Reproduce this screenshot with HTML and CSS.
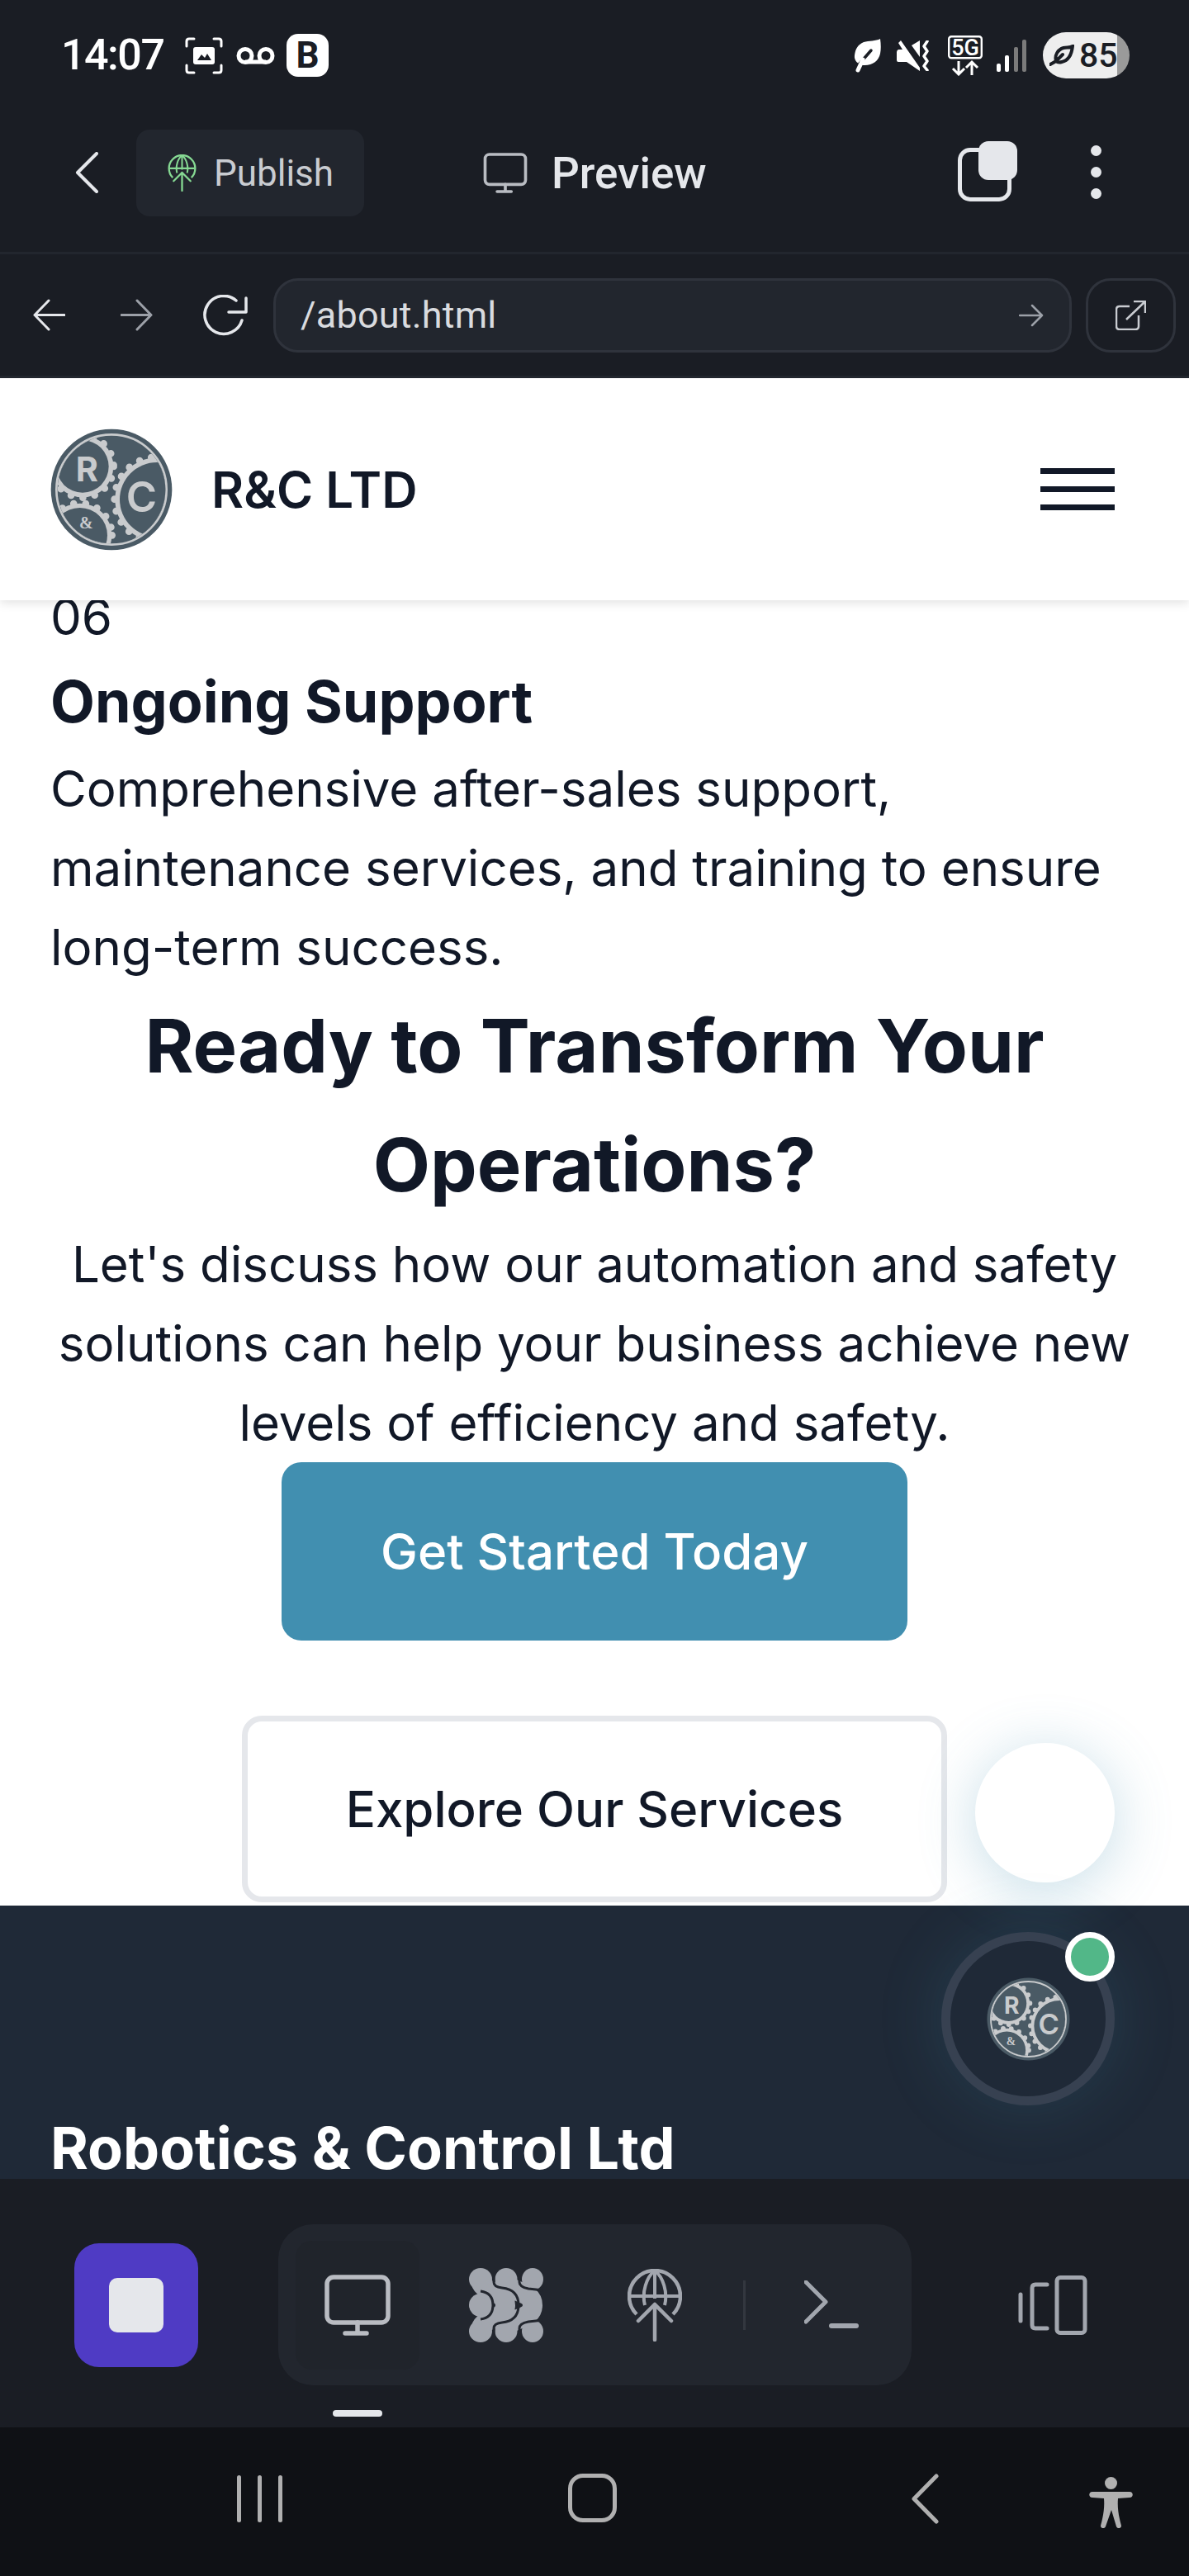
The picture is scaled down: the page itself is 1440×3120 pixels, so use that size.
FILE: index.html
```html
<!DOCTYPE html>
<html lang="en">
<head>
<meta charset="utf-8">
<title>R&amp;C LTD</title>
<link rel="stylesheet" href="styles.css">
</head>
<body>
<svg class="defs" aria-hidden="true">
  <defs>
    <symbol id="i-monitor" viewBox="0 0 80 74">
      <rect x="3" y="3" width="74" height="55" rx="8" fill="none" stroke="currentColor" stroke-width="5.5"/>
      <path d="M40 58V70M25 71H51" fill="none" stroke="currentColor" stroke-width="5.5" stroke-linecap="round"/>
    </symbol>
    <symbol id="i-globe" viewBox="0 0 66 88">
      <path d="M11 55C5 49 2 41 2 33C2 16 16 2 33 2C50 2 64 16 64 33C64 41 61 49 55 55" fill="none" stroke="currentColor" stroke-width="4.5"/>
      <path d="M21 44C17 28 23 10 33 2C43 10 49 28 45 44M33 2V36M3 33H63" fill="none" stroke="currentColor" stroke-width="4"/>
      <path d="M33 86V43M13 63L33 43L53 63" fill="none" stroke="currentColor" stroke-width="4.5" stroke-linecap="round" stroke-linejoin="round"/>
    </symbol>
    <symbol id="i-logo" viewBox="63 14 444 444">
      <clipPath id="logo-clip"><circle cx="285" cy="236" r="196"/></clipPath>
      <circle cx="285" cy="236" r="220" fill="#4a5a65"/>
      <circle cx="285" cy="236" r="200" fill="#4a5a65" stroke="#c9cbcd" stroke-width="8"/>
      <g clip-path="url(#logo-clip)">
        <circle cx="180" cy="152" r="112" fill="#c9cbcd"/>
        <circle cx="180" cy="152" r="113" class="teeth"/>
        <circle cx="450" cy="272" r="152" fill="#c9cbcd"/>
        <circle cx="450" cy="272" r="154" class="teeth"/>
        <circle cx="170" cy="402" r="116" fill="#c9cbcd"/>
        <circle cx="170" cy="402" r="117" class="teeth"/>
        <circle cx="180" cy="152" r="95" fill="#4a5a65"/>
        <circle cx="450" cy="272" r="135" fill="#4a5a65"/>
        <circle cx="170" cy="402" r="100" fill="#4a5a65"/>
      </g>
      <text x="155" y="207" class="logo-r">R</text>
      <text x="338" y="316" class="logo-c">C</text>
      <text x="168" y="376" class="logo-amp">&amp;</text>
    </symbol>
  </defs>
</svg>

<div class="phone">
  <div class="status">
    <div class="status-left">
      <span class="time">14:07</span>
      <svg class="ic-shot" viewBox="0 0 46 45"><path d="M2 11V5Q2 2 5 2H11M35 2H41Q44 2 44 5V11M2 34V40Q2 43 5 43H11M35 43H41Q44 43 44 40V34" fill="none" stroke="#fff" stroke-width="3" stroke-linecap="round"/><rect x="10" y="12" width="26" height="21" rx="3" fill="#fff"/><path d="M15 28L20 21L24 25L27 20L32 28Z" fill="#1a1d24"/></svg>
      <svg class="ic-vm" viewBox="0 0 47 21"><path d="M11 18H36" stroke="#fff" stroke-width="5"/><circle cx="11" cy="10.500" r="8" fill="none" stroke="#fff" stroke-width="5"/><circle cx="36" cy="10.500" r="8" fill="none" stroke="#fff" stroke-width="5"/></svg>
      <span class="badge-b">B</span>
    </div>
    <div class="status-right">
      <svg class="ic-leaf" viewBox="0 0 33 42"><path d="M32 1C33 8 33 14 32 19C30 28 22 34 11 33C5 32 0 27 1 21C2 13 5 8 12 5C18 3 27 4 32 1Z" fill="#fff"/><path d="M21 15L7 31" stroke="#1a1d24" stroke-width="3.500" stroke-linecap="round"/><path d="M11 26L5 39" stroke="#fff" stroke-width="5" stroke-linecap="round"/></svg>
      <svg class="ic-mute" viewBox="0 0 40 37"><path d="M2 3L5 0L28 33V37L12 26H2Q0 26 0 24V14Q0 12 2 11H7Z" fill="#fff"/><path d="M18 6L28 0V20Z" fill="#fff"/><path d="M37 1L33 7L37 13L33 19L37 25L33 31L37 36" fill="none" stroke="#fff" stroke-width="3.500" stroke-linejoin="round" stroke-linecap="round"/></svg>
      <svg class="ic-5g" viewBox="0 0 42 49"><rect x="1.200" y="1.200" width="39.600" height="26" rx="3" fill="none" stroke="#fff" stroke-width="2.400"/><text x="21" y="23.500" class="txt-5g">5G</text><path d="M13 31V47M6 40L13 47L20 40M29 48V32M22 39L29 32L36 39" fill="none" stroke="#fff" stroke-width="3"/></svg>
      <svg class="ic-signal" viewBox="0 0 36 39"><rect x="0" y="29" width="5" height="10" rx="2" fill="#fff"/><rect x="10" y="19" width="5" height="20" rx="2" fill="#fff"/><rect x="21" y="9" width="5" height="30" rx="2" fill="#7b7b7b"/><rect x="31" y="0" width="5" height="39" rx="2" fill="#7b7b7b"/></svg>
      <div class="battery">
        <svg class="ic-batleaf" viewBox="0 0 30 26"><path d="M28 2C27 11 24 19 15 21C12 22 9 21 8 20C6 13 10 6 17 4C21 3 25 4 28 2ZM8 20L16 12M8 20L1 24" fill="none" stroke="#1a1d24" stroke-width="4" stroke-linecap="round"/></svg>
        <span class="bat-num">85</span>
      </div>
    </div>
  </div>

  <div class="toolbar">
    <svg class="ic-chev" viewBox="0 0 28 50"><path d="M26 2L3 25L26 48" fill="none" stroke="#e5e7eb" stroke-width="4" stroke-linecap="round" stroke-linejoin="round"/></svg>
    <div class="publish">
      <svg class="ic-globe-sm"><use href="#i-globe"/></svg>
      <span>Publish</span>
    </div>
    <div class="preview">
      <svg class="ic-monitor-sm"><use href="#i-monitor"/></svg>
      <span>Preview</span>
    </div>
    <div class="tool-right">
      <div class="tabs"><span class="tab-back"></span><span class="tab-front"></span></div>
      <div class="kebab"><i></i><i></i><i></i></div>
    </div>
  </div>

  <div class="addr-row">
    <svg class="ic-arrow" viewBox="0 0 39 39"><path d="M38 19.500H2M19 2L2 19.500L19 37" fill="none" stroke="#e5e7eb" stroke-width="3" stroke-linecap="round" stroke-linejoin="round"/></svg>
    <svg class="ic-arrow dim" viewBox="0 0 39 39"><path d="M1 19.500H37M20 2L37 19.500L20 37" fill="none" stroke="#9ca0a8" stroke-width="3" stroke-linecap="round" stroke-linejoin="round"/></svg>
    <svg class="ic-reload" viewBox="0 0 54 50"><path d="M40 7A23 23 0 1 0 47 31" fill="none" stroke="#e5e7eb" stroke-width="3.500" stroke-linecap="round"/><path d="M52 4V21H31" fill="none" stroke="#e5e7eb" stroke-width="3.500" stroke-linecap="round" stroke-linejoin="round"/></svg>
    <div class="url">
      <span>/about.html</span>
      <svg class="ic-go" viewBox="0 0 30 28"><path d="M1 14H28M16 2L28 14L16 26" fill="none" stroke="#9ca0a8" stroke-width="2.500" stroke-linecap="round" stroke-linejoin="round"/></svg>
    </div>
    <div class="open-ext">
      <svg class="ic-ext" viewBox="0 0 37 36"><path d="M17 7H5Q1 7 1 11V31Q1 35 5 35H24Q28 35 28 31V18" fill="none" stroke="#c9ccd1" stroke-width="2.500"/><path d="M13 23L36 1M22 1H36V15" fill="none" stroke="#c9ccd1" stroke-width="2.500"/></svg>
    </div>
  </div>

  <div class="viewport">
    <header class="site-header">
      <svg class="site-logo"><use href="#i-logo"/></svg>
      <span class="brand">R&amp;C LTD</span>
      <div class="burger"><i></i><i></i><i></i></div>
    </header>
    <div class="scroll">
      <main class="content">
        <div class="num">06</div>
        <h3>Ongoing Support</h3>
        <p>Comprehensive after-sales support, maintenance services, and training to ensure long-term success.</p>
        <h2>Ready to Transform Your Operations?</h2>
        <p class="lead">Let's discuss how our automation and safety solutions can help your business achieve new levels of efficiency and safety.</p>
        <div class="cta">
          <a class="btn btn-primary">Get Started Today</a>
          <a class="btn btn-outline">Explore Our Services</a>
        </div>
      </main>
      <footer class="site-footer">
        <h4>Robotics &amp; Control Ltd</h4>
      </footer>
    </div>
    <div class="fab"></div>
    <div class="chat">
      <svg class="chat-logo"><use href="#i-logo"/></svg>
      <span class="online"></span>
    </div>
  </div>

  <div class="dock">
    <div class="stop"><span></span></div>
    <div class="dock-pill">
      <div class="dock-tab"><svg class="ic-monitor"><use href="#i-monitor"/></svg></div>
      <svg class="ic-blobs" viewBox="0 0 90 90">
        <g fill="#a2a6ae"><ellipse cx="77" cy="13.500" rx="13" ry="13.500"/><ellipse cx="14" cy="45" rx="14" ry="14"/><ellipse cx="77" cy="76.500" rx="13" ry="13.500"/><ellipse cx="14" cy="13.500" rx="14" ry="13.500"/><ellipse cx="14" cy="76.500" rx="14" ry="13.500"/><ellipse cx="45" cy="13.500" rx="13.500" ry="13.500"/><ellipse cx="45" cy="76.500" rx="13.500" ry="13.500"/></g>
        <path d="M14 13C14 32 44 25 44 45C44 65 14 58 14 77M45 13C45 32 77 25 77 45C77 65 45 58 45 77" fill="none" stroke="#a2a6ae" stroke-width="24"/>
        <path d="M30 0V17Q30 23 40 24Q60 26 60 45Q60 64 40 66Q30 67 30 73V90M14 28Q29 30 29 45Q29 60 14 62M61 0V17Q61 23 72 25L90 27M61 90V73Q61 67 72 65L90 63" fill="none" stroke="#22262e" stroke-width="3"/>
      </svg>
      <svg class="ic-globe"><use href="#i-globe"/></svg>
      <span class="dock-sep"></span>
      <svg class="ic-term" viewBox="0 0 66 59"><path d="M2 2L26 26L2 50" fill="none" stroke="#a2a6ae" stroke-width="5" stroke-linecap="round" stroke-linejoin="round"/><path d="M33 55H63" stroke="#a2a6ae" stroke-width="6" stroke-linecap="round"/></svg>
    </div>
    <svg class="ic-devices" viewBox="0 0 84 72"><rect x="47" y="2.500" width="34" height="67" rx="4" fill="none" stroke="#a2a6ae" stroke-width="5"/><path d="M35 11H21Q17 11 17 15V60Q17 64 21 64H35" fill="none" stroke="#a2a6ae" stroke-width="5" stroke-linecap="round"/><path d="M3 23V55" stroke="#a2a6ae" stroke-width="5" stroke-linecap="round"/></svg>
    <span class="dock-marker"></span>
  </div>

  <nav class="sysnav">
    <div class="recents"><i></i><i></i><i></i></div>
    <span class="home"></span>
    <svg class="ic-navback" viewBox="0 0 33 61"><path d="M30 3L3 30.500L30 58" fill="none" stroke="#b0b0b0" stroke-width="5" stroke-linecap="round" stroke-linejoin="round"/></svg>
    <svg class="ic-a11y" viewBox="0 0 53 62"><ellipse cx="26.500" cy="7.500" rx="7.500" ry="7.500" fill="#b0b0b0"/><path d="M4 18H49C54 18 54 25 49 25L35 26C34 38 36 48 39 59C39 63 34 63 33 60L27 40L20 60C19 63 14 63 14 59C17 48 19 38 18 26L4 25C-1 25 -1 18 4 18Z" fill="#b0b0b0"/></svg>
  </nav>
</div>
</body>
</html>
```

FILE: styles.css
```css
* { box-sizing: border-box; }
html, body { margin: 0; padding: 0; height: 3120px; overflow: hidden; background: #1a1d24; }
.defs { width: 0; height: 0; display: block; }
svg { display: block; flex: none; color: inherit; }
.phone { width: 1440px; height: 3120px; display: flex; flex-direction: column; background: #1a1d24; font-family: Roboto, sans-serif; }

/* status bar */
.status { height: 134px; flex: none; display: flex; align-items: center; justify-content: space-between; padding: 0 72px 0 74px; color: #fff; }
.status-left, .status-right { display: flex; align-items: center; }
.time { font: 500 52px/1 Roboto, sans-serif; width: 124px; letter-spacing: -1.5px; }
.ic-shot { width: 46px; height: 45px; margin-left: 26px; }
.ic-vm { width: 47px; height: 21px; margin-left: 16px; }
.badge-b { width: 51px; height: 52px; margin-left: 14px; background: #fff; color: #1a1d24; border-radius: 14px; font: 700 44px/52px Roboto, sans-serif; text-align: center; }
.ic-leaf { width: 33px; height: 42px; }
.ic-mute { width: 40px; height: 37px; margin-left: 19px; }
.ic-5g { width: 42px; height: 49px; margin-left: 22px; }
.txt-5g { font: 500 27px Roboto, sans-serif; fill: #fff; text-anchor: middle; }
.ic-signal { width: 36px; height: 39px; margin-left: 17px; }
.battery { width: 105px; height: 56px; margin-left: 20px; border-radius: 28px; background: linear-gradient(90deg, #eeeeee 86%, #9a9a9a 86%); display: flex; align-items: center; padding-left: 8px; color: #1a1d24; }
.ic-batleaf { width: 30px; height: 26px; }
.bat-num { font: 500 41px/1 Roboto, sans-serif; margin-left: 6px; }

/* app toolbar */
.toolbar { height: 171px; flex: none; padding: 23px 106px 0 91px; display: flex; align-items: flex-start; }
.ic-chev { width: 28px; height: 50px; margin-top: 27px; }
.publish { width: 276px; height: 105px; margin-left: 46px; background: #22262e; border-radius: 16px; display: flex; align-items: center; padding-left: 38px; color: #c9ccd1; font-size: 44px; }
.publish span { margin-left: 21px; }
.ic-globe-sm { width: 35px; height: 45px; color: #86d993; }
.preview { display: flex; align-items: center; height: 105px; margin-left: 144px; color: #e5e7eb; font-size: 53px; font-weight: 500; }
.preview span { margin-left: 29px; }
.ic-monitor-sm { width: 54px; height: 49px; color: #b9bcc2; }
.tool-right { margin-left: auto; display: flex; align-items: flex-start; height: 105px; }
.tabs { width: 72px; height: 73px; margin-top: 14px; position: relative; }
.tab-back { display: block; width: 65px; height: 65px; margin-top: 8px; border: 5px solid #e5e7eb; border-radius: 15px; }
.tab-front { position: absolute; right: 0; top: 0; width: 47px; height: 47px; background: #e5e7eb; border-radius: 12px; }
.kebab { margin-left: 89px; margin-top: 19px; display: flex; flex-direction: column; gap: 13px; }
.kebab i { display: block; width: 13px; height: 13px; border-radius: 50%; background: #e5e7eb; }

/* address row */
.addr-row { height: 153px; flex: none; border-top: 3px solid #22262e; border-bottom: 3px solid #22262e; display: flex; align-items: center; padding-left: 40px; }
.ic-arrow { width: 39px; height: 39px; }
.ic-arrow.dim { margin-left: 67px; }
.ic-reload { width: 54px; height: 50px; margin-left: 61px; }
.url { width: 967px; height: 90px; margin-left: 31px; background: #22262e; border: 3px solid #2f333c; border-radius: 30px; display: flex; align-items: center; justify-content: space-between; padding: 0 31px 0 30px; color: #d9dbdf; font-size: 45px; letter-spacing: .2px; }
.ic-go { width: 30px; height: 28px; }
.open-ext { width: 109px; height: 90px; margin-left: 17px; border: 3px solid #2f333c; border-radius: 30px; display: flex; align-items: center; justify-content: center; }
.ic-ext { width: 37px; height: 36px; }

/* web page viewport */
.viewport { height: 2181px; flex: none; position: relative; overflow: hidden; background: #fff; display: flex; flex-direction: column; font-family: Inter, sans-serif; color: #111827; }
.site-header { height: 269px; flex: none; display: flex; align-items: center; padding: 0 90px 0 61px; background: #fff; box-shadow: 0 3px 12px rgba(0,0,0,.12); position: relative; z-index: 2; }
.site-logo { width: 148px; height: 148px; }
.teeth { fill: none; stroke: #c9cbcd; stroke-width: 26px; stroke-linecap: round; stroke-dasharray: 0 44; }
.logo-r { font: 700 124px Inter, sans-serif; fill: #c9cbcd; }
.logo-c { font: 600 152px Inter, sans-serif; fill: #c9cbcd; }
.logo-amp { font: 700 60px "Liberation Serif", serif; fill: #c9cbcd; }
.brand { margin-left: 47px; font-size: 60px; font-weight: 600; }
.burger { margin-left: auto; width: 90px; display: flex; flex-direction: column; gap: 15px; }
.burger i { display: block; height: 7px; background: #111827; }
.scroll { flex: 1; overflow: hidden; }
.content { padding: 0 61px 4px; margin-top: -28px; font-size: 60px; line-height: 96px; }
.num { height: 94px; }
.content h3 { margin: 0; font-size: 70px; line-height: 114px; font-weight: 700; }
.content p { margin: 0; }
.content h2 { margin: 0; font-size: 90px; line-height: 144px; font-weight: 700; text-align: center; }
.content .lead { text-align: center; }
.cta { display: flex; flex-direction: column; align-items: center; gap: 91px; }
.btn { display: flex; align-items: center; justify-content: center; border-radius: 24px; font-size: 60px; font-weight: 500; }
.btn-primary { width: 758px; height: 216px; background: #418fb0; color: #fff; }
.btn-outline { width: 854px; height: 226px; border: 7px solid #e5e7eb; background: #fff; color: #111827; }
.site-footer { background: #1f2937; padding: 238px 61px 0; height: 400px; color: #fff; }
.site-footer h4 { margin: 0; font-size: 70px; line-height: 112px; font-weight: 700; }
.fab { position: absolute; right: 90px; top: 1653px; width: 169px; height: 169px; border-radius: 50%; background: #fff; box-shadow: 0 10px 70px rgba(65,143,176,.3); z-index: 1; }
.chat { position: absolute; right: 90px; top: 1882px; width: 210px; height: 210px; border-radius: 50%; background: #1f2937; border: 11px solid #374151; box-shadow: 0 0 80px rgba(65,143,176,.2); display: flex; align-items: center; justify-content: center; z-index: 1; }
.chat-logo { width: 101px; height: 101px; }
.online { position: absolute; right: -11px; top: -11px; width: 60px; height: 60px; border-radius: 50%; background: #52b788; border: 7px solid #fff; }

/* dock */
.dock { height: 301px; flex: none; position: relative; display: flex; align-items: flex-start; padding: 55px 0 0 90px; background: #1a1d24; }
.stop { width: 150px; height: 150px; margin-top: 23px; border-radius: 30px; background: #4f3bc4; display: flex; align-items: center; justify-content: center; }
.stop span { width: 66px; height: 66px; border-radius: 10px; background: #e5e7eb; }
.dock-pill { width: 767px; height: 195px; margin-left: 97px; border-radius: 42px; background: #22262e; display: flex; align-items: center; padding-left: 21px; }
.dock-tab { width: 150px; height: 156px; flex: none; border-radius: 20px; background: #20242b; display: flex; align-items: center; justify-content: center; color: #b9bcc2; }
.ic-monitor { width: 80px; height: 74px; }
.ic-blobs { width: 90px; height: 90px; margin-left: 60px; }
.ic-globe { width: 66px; height: 88px; margin-left: 102px; color: #a2a6ae; }
.dock-sep { width: 3px; height: 60px; margin-left: 74px; background: #33373f; }
.ic-term { width: 66px; height: 59px; margin-left: 71px; }
.ic-devices { width: 84px; height: 72px; margin-left: 129px; margin-top: 62px; }
.dock-marker { position: absolute; left: 403px; top: 280px; width: 60px; height: 8px; border-radius: 4px; background: #e5e7eb; }

/* system nav */
.sysnav { flex: 1; background: #0f1115; position: relative; display: flex; align-items: flex-start; padding: 56px 0 0 287px; }
.recents { display: flex; gap: 20px; margin-top: 2px; }
.recents i { display: block; width: 5px; height: 57px; border-radius: 3px; background: #b0b0b0; }
.home { width: 59px; height: 59px; margin-left: 346px; border: 5px solid #b0b0b0; border-radius: 18px; }
.ic-navback { width: 33px; height: 61px; margin-left: 357px; }
.ic-a11y { width: 53px; height: 62px; margin-left: 182px; margin-top: 4px; }
```
